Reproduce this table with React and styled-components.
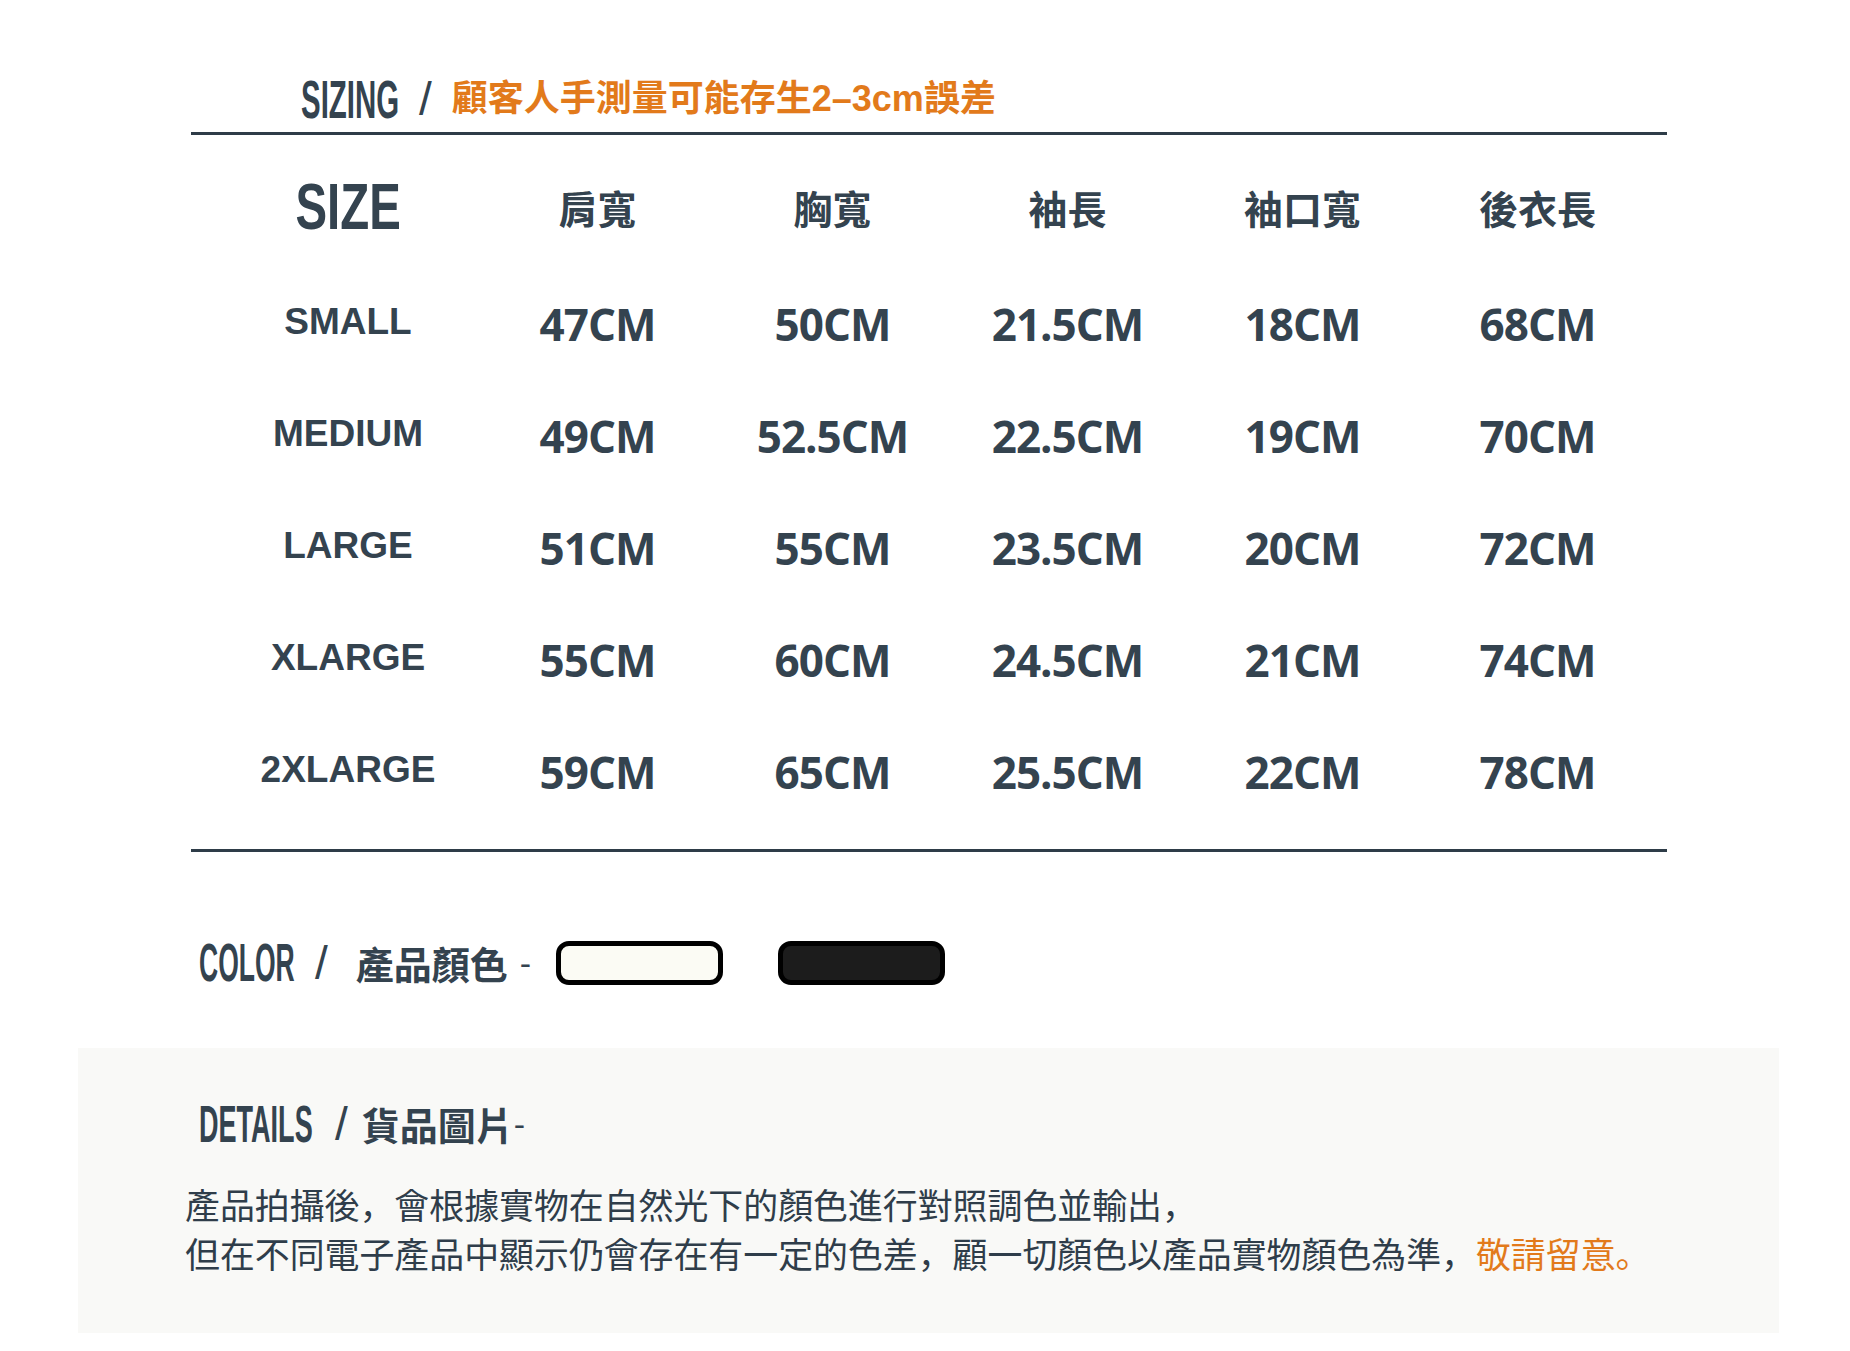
import React from "react";
import styled, { createGlobalStyle } from "styled-components";

const GlobalStyle = createGlobalStyle`
  body {
    margin: 0;
    background: #ffffff;
    font-family: "Liberation Sans", "Noto Sans CJK TC", sans-serif;
    color: #34434f;
  }
`;

const Page = styled.div`
  width: 1850px;
  height: 1351px;
  overflow: hidden;
  background: #ffffff;
`;

const SizingBlock = styled.section`
  margin-left: 191px;
  width: 1476px;
`;

const HeadRow = styled.div`
  display: flex;
  align-items: center;
  height: 135px;
  padding: 66px 0 0 110px;
  box-sizing: border-box;
  border-bottom: 3px solid #2e3c48;
`;

const Condensed = styled.span`
  display: inline-block;
  width: ${(p) => p.$w}px;
  white-space: nowrap;
  font-family: "Liberation Sans", sans-serif;
  font-weight: 700;
  font-size: ${(p) => p.$size}px;
  line-height: 1;
  color: #34434f;

  span {
    display: inline-block;
    transform: scaleX(${(p) => p.$sx});
    transform-origin: left center;
  }
`;

const Slash = styled.span`
  display: inline-block;
  font-family: "Liberation Sans", sans-serif;
  font-weight: 400;
  font-size: 46px;
  line-height: 1;
  color: #34434f;
  margin: 0 ${(p) => p.$after}px 0 ${(p) => p.$before}px;
`;

const Notice = styled.span`
  font-family: "Liberation Sans", "Noto Sans CJK TC", sans-serif;
  font-weight: 700;
  font-size: 36px;
  line-height: 1;
  color: #e27a1b;
`;

const Table = styled.div`
  display: grid;
  grid-template-columns: 264px repeat(5, 235px);
  grid-auto-rows: 112px;
  align-items: center;
  justify-items: center;
  padding: 16px 0 26px 25px;
  border-bottom: 3px solid #2e3c48;
`;

const SizeTitle = styled.div`
  font-family: "Liberation Sans", sans-serif;
  font-weight: 700;
  font-size: 64px;
  line-height: 1;
  color: #34434f;
  transform: scaleX(0.74);
`;

const ColHead = styled.div`
  font-family: "Noto Sans CJK TC", sans-serif;
  font-weight: 700;
  font-size: 39px;
  line-height: 1;
  color: #34434f;
`;

const SizeLabel = styled.div`
  font-family: "Liberation Sans", sans-serif;
  font-weight: 700;
  font-size: 37px;
  line-height: 1;
  color: #34434f;
  margin-top: 5px;
`;

const Value = styled.div`
  font-family: "Open Sans", sans-serif;
  font-weight: 700;
  font-size: 44px;
  letter-spacing: -1px;
  line-height: 1;
  color: #34434f;
  margin-top: 9px;
`;

const ColorRow = styled.div`
  display: flex;
  align-items: center;
  height: 196px;
  padding: 25px 0 0 199px;
  box-sizing: border-box;
`;

const CjkLabel = styled.span`
  font-family: "Noto Sans CJK TC", sans-serif;
  font-weight: 700;
  font-size: ${(p) => p.$size}px;
  line-height: 1;
  color: #34434f;
`;

const Dash = styled.span`
  font-family: "Liberation Sans", sans-serif;
  font-size: 34px;
  line-height: 1;
  color: #34434f;
  margin: 0 ${(p) => p.$after}px 0 ${(p) => p.$before}px;
`;

const Swatch = styled.div`
  width: 167px;
  height: 44px;
  box-sizing: border-box;
  border: 5px solid #000000;
  border-radius: 13px;
  background: ${(p) => p.$fill};
  margin-right: 55px;
`;

const Details = styled.section`
  margin: 0 71px 0 78px;
  height: 285px;
  background: #f9f9f7;
  padding: 50px 0 0 0;
  box-sizing: border-box;
`;

const DetailsHead = styled.div`
  display: flex;
  align-items: center;
  padding-left: 121px;
`;

const Para = styled.p`
  margin: 30px 0 0 107px;
  font-family: "Noto Sans CJK JP", "Noto Sans CJK TC", sans-serif;
  font-weight: 400;
  font-size: 34.9px;
  line-height: 49px;
  color: #2f3d4a;
`;

const Highlight = styled.span`
  color: #e27a1b;
`;

const heads = ["肩寬", "胸寬", "袖長", "袖口寬", "後衣長"];

const rows = [
  ["SMALL", "47CM", "50CM", "21.5CM", "18CM", "68CM"],
  ["MEDIUM", "49CM", "52.5CM", "22.5CM", "19CM", "70CM"],
  ["LARGE", "51CM", "55CM", "23.5CM", "20CM", "72CM"],
  ["XLARGE", "55CM", "60CM", "24.5CM", "21CM", "74CM"],
  ["2XLARGE", "59CM", "65CM", "25.5CM", "22CM", "78CM"],
];

export default function App() {
  return (
    <Page>
      <GlobalStyle />
      <SizingBlock>
        <HeadRow>
          <Condensed $w={98} $size={54} $sx={0.545}>
            <span>SIZING</span>
          </Condensed>
          <Slash $before={20} $after={20}>/</Slash>
          <Notice>顧客人手測量可能存生2–3cm誤差</Notice>
        </HeadRow>
        <Table>
          <SizeTitle>SIZE</SizeTitle>
          {heads.map((h) => (
            <ColHead key={h}>{h}</ColHead>
          ))}
          {rows.map((r) => (
            <React.Fragment key={r[0]}>
              <SizeLabel>{r[0]}</SizeLabel>
              {r.slice(1).map((v, i) => (
                <Value key={i}>{v}</Value>
              ))}
            </React.Fragment>
          ))}
        </Table>
      </SizingBlock>

      <ColorRow>
        <Condensed $w={96} $size={53} $sx={0.5}>
          <span>COLOR</span>
        </Condensed>
        <Slash $before={20} $after={28}>/</Slash>
        <CjkLabel $size={38}>產品顏色</CjkLabel>
        <Dash $before={12} $after={25}>-</Dash>
        <Swatch $fill="#fbfbf4" />
        <Swatch $fill="#1c1c1c" />
      </ColorRow>

      <Details>
        <DetailsHead>
          <Condensed $w={116} $size={52} $sx={0.52}>
            <span>DETAILS</span>
          </Condensed>
          <Slash $before={20} $after={14}>/</Slash>
          <CjkLabel $size={38}>貨品圖片</CjkLabel>
          <Dash $before={0} $after={0}>-</Dash>
        </DetailsHead>
        <Para>
          產品拍攝後，會根據實物在自然光下的顏色進行對照調色並輸出，
          <br />
          但在不同電子產品中顯示仍會存在有一定的色差，顧一切顏色以產品實物顏色為準，
          <Highlight>敬請留意。</Highlight>
        </Para>
      </Details>
    </Page>
  );
}
